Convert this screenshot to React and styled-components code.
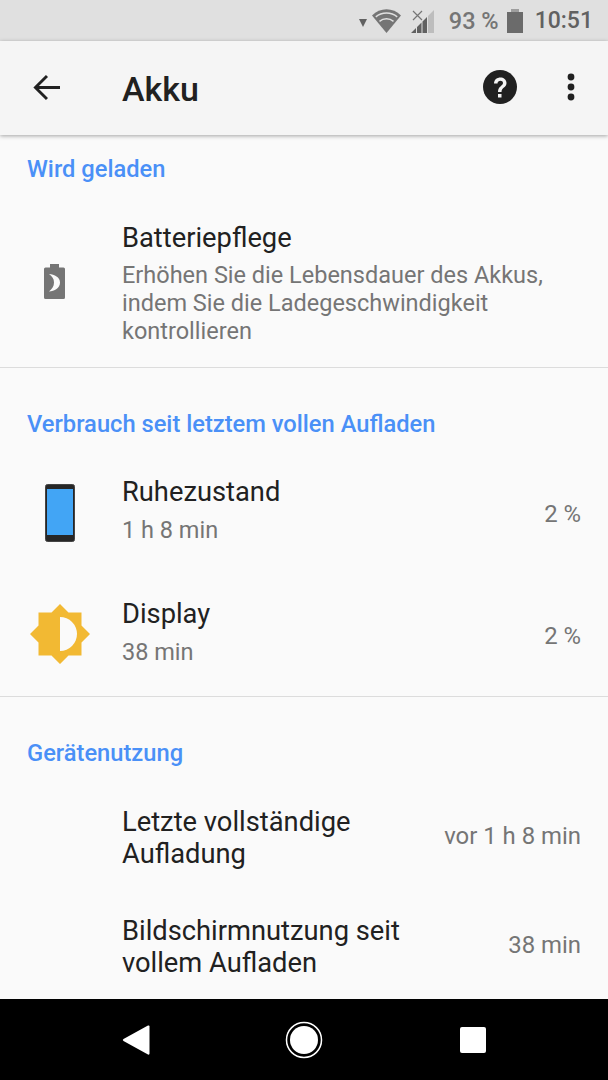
import React from 'react';
import styled, { createGlobalStyle } from 'styled-components';

const GlobalStyle = createGlobalStyle`
  html, body {
    margin: 0;
    padding: 0;
    background: #fafafa;
    font-family: Roboto, "Noto Sans", sans-serif;
  }
  * { box-sizing: border-box; }
`;

const BatteryCareIcon = () => (
  <svg width="21" height="35" viewBox="0 0 21 35">
    <path d="M6 0h9v3.500h4.500q1.500 0 1.500 1.500v28.500q0 1.500-1.500 1.500h-18q-1.500 0-1.500-1.500v-28.500q0-1.500 1.500-1.500h4.500z" fill="#757575" />
    <path d="M5 10c5.500 .5 11 3 11 8.500s-5.500 8.500-11 9c3-2.500 5-5 5-9s-2-6-5-8.500z" fill="#fafafa" />
  </svg>
);

const PhoneIcon = () => (
  <svg width="30" height="58" viewBox="0 0 30 58">
    <rect x="0.500" y="0.500" width="29" height="57" rx="2" fill="#262626" stroke="#444" />
    <rect x="2" y="5" width="26" height="46" fill="#42a5f5" />
  </svg>
);

const BrightnessIcon = () => (
  <svg width="60" height="60" viewBox="0 0 60 60">
    <path d="M30 0l8.500 8.500h13v13l8.500 8.500-8.500 8.500v13h-13l-8.500 8.500-8.500-8.500h-13v-13l-8.500-8.500 8.500-8.500v-13h13z" fill="#f2b933" />
    <path d="M30 13a17 17 0 0 1 0 34z" fill="#fafafa" />
  </svg>
);

const WifiIcon = () => (
  <svg width="29" height="24" viewBox="0 0 29 24">
    <path d="M14.500 24 0 6.500C8-2 21-2 29 6.500z" fill="#757575" />
    <path d="M3.800 7.800c6-5 15.400-5 21.400 0M7.500 12.300c4-3.300 10-3.300 14 0" stroke="#e0e0e0" strokeWidth="1.500" fill="none" />
  </svg>
);

const SignalIcon = () => (
  <svg width="23" height="23" viewBox="0 0 23 23">
    <path d="M17 23V6l6-6v23z" fill="#bdbdbd" />
    <path d="M0 23l5-5v5zM6 23v-6l4.500-4.500V23zM11.500 23V11.500L16 7v16z" fill="#616161" />
    <path d="M2 1l9 9M11 1l-9 9" stroke="#757575" strokeWidth="1.200" />
  </svg>
);

const StatusBar = styled.div`
  height: 41px;
  background: #e0e0e0;
  display: flex;
  align-items: center;
  justify-content: flex-end;
  padding-right: 15px;
  color: #757575;
`;

const DropMark = styled.span`
  width: 0;
  height: 0;
  margin: 5px 5px 0 0;
  border-left: 4px solid transparent;
  border-right: 4px solid transparent;
  border-top: 8px solid #616161;
`;

const SignalSlot = styled.span`
  display: flex;
  margin: 1px 0 0 10px;
`;

const StatusPercent = styled.span`
  font-size: 23.500px;
  font-weight: 500;
  margin: 0 8px 0 15px;
`;

const BatteryGauge = styled.span`
  position: relative;
  width: 16px;
  height: 21px;
  margin: 4px 12px 0 0;
  background: #6b6b6b;
  &::before {
    content: '';
    position: absolute;
    top: -3px;
    left: 4px;
    width: 8px;
    height: 3px;
    background: #9e9e9e;
  }
`;

const Clock = styled.span`
  font-size: 23px;
  font-weight: 500;
  color: #616161;
`;

const Toolbar = styled.header`
  position: relative;
  z-index: 1;
  height: 94px;
  background: #f5f5f5;
  display: flex;
  align-items: center;
  box-shadow: 0 1px 4px rgba(0, 0, 0, 0.35);
`;

const BackButton = styled.span`
  width: 122px;
  padding-left: 33px;
  margin-top: -1px;
  display: flex;
`;

const ToolbarTitle = styled.h1`
  flex: 1;
  margin: 2px 0 0;
  font-size: 34px;
  font-weight: 500;
  color: #212121;
`;

const ToolbarIcons = styled.div`
  display: flex;
  align-items: center;
  gap: 50px;
  padding-right: 33px;
  margin-top: -2px;
`;

const Content = styled.main`
  height: 864px;
  overflow: hidden;
  background: #fafafa;
`;

const Section = styled.section`
  padding-top: ${(p) => p.$top}px;
  padding-bottom: ${(p) => p.$bottom || 0}px;
  border-bottom: ${(p) => (p.$divided ? '1px solid #dcdcdc' : 'none')};
`;

const SectionTitle = styled.h2`
  margin: 0;
  padding-left: 27px;
  font-size: 23.700px;
  line-height: 30px;
  font-weight: 500;
  color: #4a90f7;
`;

const Row = styled.div`
  display: flex;
  align-items: center;
  min-height: ${(p) => p.$height}px;
  margin-top: ${(p) => p.$gap || 0}px;
`;

const IconSlot = styled.div`
  width: 122px;
  flex: none;
  display: flex;
  justify-content: center;
  padding-right: ${(p) => p.$inset ?? 14}px;
  margin-top: ${(p) => p.$drop || 0}px;
`;

const RowBody = styled.div`
  flex: 1;
  min-width: 0;
`;

const RowTitle = styled.div`
  font-size: 27.300px;
  line-height: 32px;
  color: #212121;
`;

const RowSummary = styled.div`
  font-size: 23.500px;
  line-height: 28px;
  color: #757575;
  margin-top: ${(p) => p.$gap || 0}px;
`;

const RowValue = styled.div`
  flex: none;
  padding-right: 27px;
  font-size: 23.900px;
  color: #757575;
  margin-top: ${(p) => p.$drop || 0}px;
`;

const NavBar = styled.nav`
  height: 81px;
  background: #000;
  display: flex;
  align-items: center;
  justify-content: space-between;
  padding: 0 122px;
`;

const HomeIcon = styled.svg`
  margin-right: 2px;
`;

export default function App() {
  return (
    <>
      <GlobalStyle />
      <StatusBar>
        <DropMark />
        <WifiIcon />
        <SignalSlot><SignalIcon /></SignalSlot>
        <StatusPercent>93 %</StatusPercent>
        <BatteryGauge />
        <Clock>10:51</Clock>
      </StatusBar>
      <Toolbar>
        <BackButton>
          <svg width="27" height="27" viewBox="0 0 28 28">
            <path d="M28 14H3M14.500 2 2.500 14l12 12" stroke="#212121" strokeWidth="3" fill="none" />
          </svg>
        </BackButton>
        <ToolbarTitle>Akku</ToolbarTitle>
        <ToolbarIcons>
          <svg width="34" height="34" viewBox="0 0 34 34">
            <circle cx="17" cy="17" r="17" fill="#212121" />
            <path d="M11 13.500c0-8 12.500-8 12.500-.5 0 4.500-5 4.500-5 9h-3.500c0-6 5-6 5-9 0-3-5.500-3-5.500.5z" fill="#f5f5f5" />
            <rect x="15" y="24" width="3.500" height="3.500" fill="#f5f5f5" />
          </svg>
          <svg width="8" height="28" viewBox="0 0 8 28">
            <circle cx="4" cy="4" r="3.400" fill="#212121" />
            <circle cx="4" cy="14" r="3.400" fill="#212121" />
            <circle cx="4" cy="24" r="3.400" fill="#212121" />
          </svg>
        </ToolbarIcons>
      </Toolbar>
      <Content>
        <Section $top={19} $bottom={15} $divided>
          <SectionTitle>Wird geladen</SectionTitle>
          <Row $height={137} $gap={31}>
            <IconSlot $drop={-4}><BatteryCareIcon /></IconSlot>
            <RowBody>
              <RowTitle>Batteriepflege</RowTitle>
              <RowSummary $gap={7}>
                Erhöhen Sie die Lebensdauer des Akkus,<br />
                indem Sie die Ladegeschwindigkeit<br />
                kontrollieren
              </RowSummary>
            </RowBody>
          </Row>
        </Section>
        <Section $top={41} $bottom={24} $divided>
          <SectionTitle>Verbrauch seit letztem vollen Aufladen</SectionTitle>
          <Row $height={80} $gap={31}>
            <IconSlot $inset={2} $drop={5}><PhoneIcon /></IconSlot>
            <RowBody>
              <RowTitle>Ruhezustand</RowTitle>
              <RowSummary $gap={8}>1 h 8 min</RowSummary>
            </RowBody>
            <RowValue $drop={7}>2 %</RowValue>
          </Row>
          <Row $height={80} $gap={42}>
            <IconSlot $inset={2} $drop={4}><BrightnessIcon /></IconSlot>
            <RowBody>
              <RowTitle>Display</RowTitle>
              <RowSummary $gap={8}>38 min</RowSummary>
            </RowBody>
            <RowValue $drop={7}>2 %</RowValue>
          </Row>
        </Section>
        <Section $top={41}>
          <SectionTitle>Gerätenutzung</SectionTitle>
          <Row $height={64} $gap={38}>
            <IconSlot />
            <RowBody>
              <RowTitle>Letzte vollständige<br />Aufladung</RowTitle>
            </RowBody>
            <RowValue $drop={-4}>vor 1 h 8 min</RowValue>
          </Row>
          <Row $height={64} $gap={45}>
            <IconSlot />
            <RowBody>
              <RowTitle>Bildschirmnutzung seit<br />vollem Aufladen</RowTitle>
            </RowBody>
            <RowValue $drop={-4}>38 min</RowValue>
          </Row>
        </Section>
      </Content>
      <NavBar>
        <svg width="28" height="32" viewBox="0 0 28 32">
          <path d="M26 1.500q1.500-.5 1.500 1v27q0 1.500-1.500 1L1.500 17q-1.500-1 0-2z" fill="#fff" />
        </svg>
        <HomeIcon width="38" height="38" viewBox="0 0 38 38">
          <circle cx="19" cy="19" r="17.500" fill="none" stroke="#fff" strokeWidth="1.500" />
          <circle cx="19" cy="19" r="14" fill="#fff" />
        </HomeIcon>
        <svg width="26" height="26" viewBox="0 0 26 26">
          <rect width="26" height="26" rx="2" fill="#fff" />
        </svg>
      </NavBar>
    </>
  );
}
